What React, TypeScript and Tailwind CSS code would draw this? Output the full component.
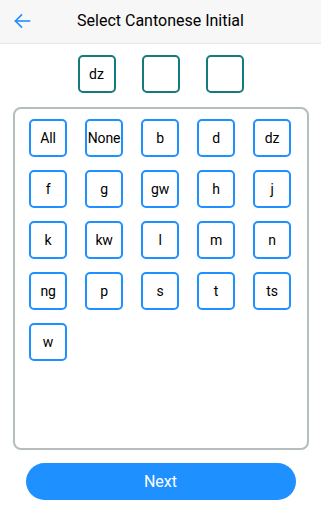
import React from "react";

const initials = [
  "All", "None", "b", "d", "dz",
  "f", "g", "gw", "h", "j",
  "k", "kw", "l", "m", "n",
  "ng", "p", "s", "t", "ts",
  "w",
];

const picked = ["dz", "", ""];

export default function App() {
  return (
    <div className="w-[321px] h-[512px] bg-white flex flex-col font-['Roboto',sans-serif] text-black">
      {/* Header */}
      <header className="relative h-[44px] shrink-0 flex items-center justify-center bg-[#f7f7f7] border-b border-[#e6e6e6]">
        <button className="absolute left-[13px] top-[12px] w-[18px] h-[18px] flex items-center justify-center text-[#1e90ff]">
          <svg width="18" height="18" viewBox="0 0 18 18" fill="none" stroke="currentColor" strokeWidth="1.6" strokeLinecap="square">
            <path d="M2.5 9H16.5" />
            <path d="M8.5 3L2.5 9L8.5 15" />
          </svg>
        </button>
        <h1 className="text-[16px] font-normal leading-none -mt-[2px]">Select Cantonese Initial</h1>
      </header>

      {/* Picked slots */}
      <div className="mt-[11px] flex justify-center gap-[26px]">
        {picked.map((p, i) => (
          <div
            key={i}
            className="w-[38px] h-[38px] rounded-[5px] border-2 border-[#137a80] flex items-center justify-center text-[14px]"
          >
            {p}
          </div>
        ))}
      </div>

      {/* Initials panel */}
      <div className="mt-[14px] mx-[12.5px] h-[343px] rounded-[8px] border-2 border-[#b5bdbd] pt-[10px]">
        <div className="grid grid-cols-[repeat(5,38px)] gap-x-[18px] gap-y-[13px] justify-center -ml-[1px]">
          {initials.map((s) => (
            <button
              key={s}
              className="w-[38px] h-[38px] rounded-[5px] border-2 border-[#1e90ff] bg-white flex items-center justify-center text-[14px] tracking-[-0.2px]"
            >
              {s}
            </button>
          ))}
        </div>
      </div>

      {/* Next */}
      <div className="mt-[13px] flex justify-center">
        <button className="w-[270px] h-[37px] rounded-full bg-[#1e90ff] text-white text-[16px]">
          Next
        </button>
      </div>
    </div>
  );
}
